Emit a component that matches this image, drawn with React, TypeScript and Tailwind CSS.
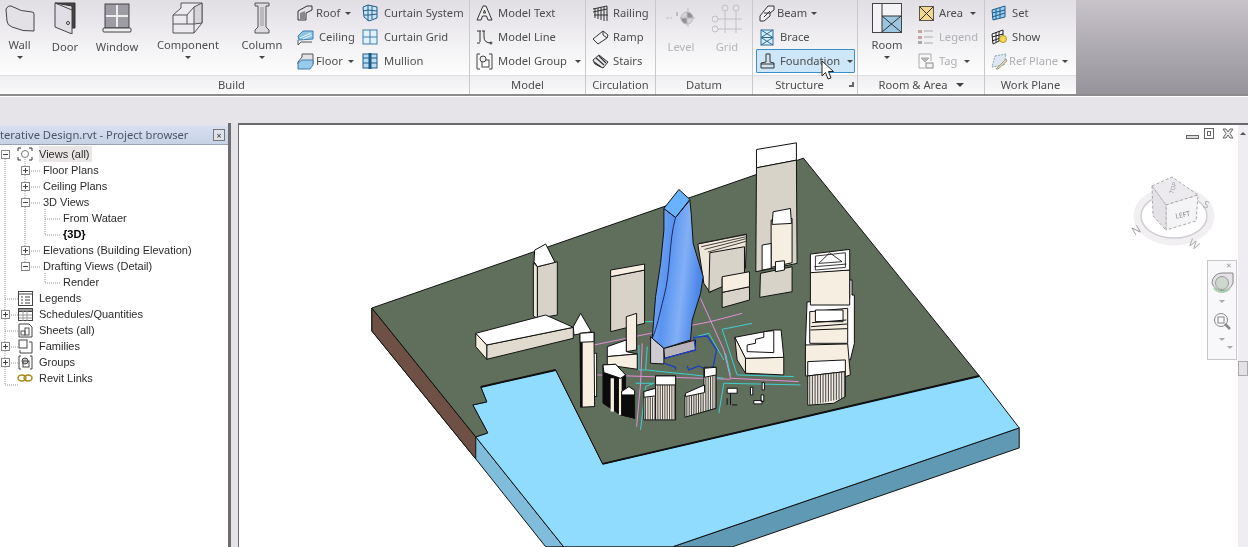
import type { ReactNode } from "react";

const FONT = "[font-family:'Noto_Sans','Open_Sans',sans-serif]";

function Caret() {
  return <span className="inline-block h-0 w-0 border-x-[3px] border-t-[3px] border-x-transparent border-t-[#444]" />;
}

function Ico({ children, w = 18, h = 18 }: { children: ReactNode; w?: number; h?: number }) {
  return (
    <svg width={w} height={h} viewBox={`0 0 ${w} ${h}`} fill="none" stroke="#333" strokeWidth="1" className="shrink-0">
      {children}
    </svg>
  );
}

const icons = {
  wall: (
    <Ico w={30} h={30}>
      <path d="M1 6 Q3 2 6 3 Q16 9 27 9 Q29 9 29 11 L29 28 Q18 29 7 24 Q2 22 2 18 Z" fill="#e3e1e6" stroke="#444" />
    </Ico>
  ),
  door: (
    <Ico w={24} h={32}>
      <path d="M2 1 L22 1 L22 26 L19 26 L19 4 Z" fill="#444" />
      <path d="M2 1 L19 8 L19 32 L2 25 Z" fill="#e1dfe5" stroke="#444" />
      <circle cx="15" cy="21" r="1.5" fill="#fff" stroke="#333" />
    </Ico>
  ),
  window: (
    <Ico w={30} h={30}>
      <rect x="3" y="1" width="24" height="24" fill="#9d9ca4" stroke="#444" />
      <path d="M15 2 V24 M4 13 H26" stroke="#eee" strokeWidth="2" />
      <rect x="1" y="25" width="28" height="4" rx="1" fill="#eeeef0" stroke="#444" />
    </Ico>
  ),
  component: (
    <Ico w={32} h={32}>
      <path d="M1 13 L9 6 L9 1 L30 1 L30 21 L22 31 L1 31 Z" fill="#eceaee" stroke="#555" />
      <path d="M1 13 H15 V22 H1 M15 13 L22 5 M22 5 H30 M22 31 V22 H15" stroke="#555" />
      <path d="M22 5 V22 L30 21 V1 Z" fill="#d7d5da" stroke="#555" />
    </Ico>
  ),
  column: (
    <Ico w={16} h={32}>
      <path d="M1 1 H15 V4 H12 V25 L15 28 V31 H1 V28 L4 25 V4 H1 Z" fill="#dcdade" stroke="#555" />
      <path d="M7 5 V24 M9 5 V24" stroke="#999" />
    </Ico>
  ),
  roof: (
    <Ico w={16} h={16}>
      <path d="M1 15 V6 L10 1 H15 V5 L9 8 V15 Z" fill="#e3e1e6" stroke="#333" />
      <path d="M3 14 V8 L8 6 L8 14 Z" fill="#888" stroke="none" />
    </Ico>
  ),
  ceiling: (
    <Ico w={17} h={17}>
      <path d="M1 7 L6 2 H16 V10 L2 11 Z" fill="#8fc3e6" stroke="#3c7fb1" />
      <path d="M3 9 L14 4 M6 10 L15 6" stroke="#e8f4fb" />
      <path d="M1 11 V16 L4 13 H15" stroke="#555" />
    </Ico>
  ),
  floor: (
    <Ico w={17} h={18}>
      <path d="M1 10 L5 5 V2 H16 V9 L16 12 H1 Z" fill="#e3e1e6" stroke="#555" />
      <path d="M1 11 L5 8 H16 V13 L13 17 H1 Z" fill="#98cbea" stroke="#3c7fb1" />
    </Ico>
  ),
  curtainSystem: (
    <Ico w={16} h={18}>
      <path d="M1 3 L6 1 L15 3 V14 L7 17 L2 13 Z" fill="#cfe5f5" stroke="#1e5c8c" />
      <path d="M6 1 V17 M10 2 V15 M1 7 L6 6 L15 7 M2 11 L7 11 L15 10" stroke="#1e5c8c" />
    </Ico>
  ),
  curtainGrid: (
    <Ico w={16} h={16}>
      <rect x="1" y="1" width="14" height="14" fill="#e2f0fa" stroke="#3c7fb1" />
      <path d="M8 1 V15 M1 8 H15" stroke="#3c7fb1" />
    </Ico>
  ),
  mullion: (
    <Ico w={16} h={16}>
      <rect x="1" y="1" width="14" height="14" fill="#bcdcf2" stroke="#1e5c8c" />
      <path d="M8 0 V16" stroke="#1e5c8c" strokeWidth="3" />
      <path d="M1 5 H15 M1 10 H15" stroke="#1e5c8c" />
    </Ico>
  ),
  modelText: (
    <Ico w={17} h={17}>
      <path d="M1 15 L7 1 H10 L16 15 H12 L10.5 11 H6.5 L5 15 Z" fill="#eee" stroke="#333" />
      <path d="M7.5 8 L8.5 5 L9.5 8 Z" stroke="#333" />
    </Ico>
  ),
  modelLine: (
    <Ico w={17} h={17}>
      <path d="M4 2 V13 M8 2 V8 Q8 14 15 14" stroke="#333" />
      <path d="M1 2 H5 M6 2 H9 M1 14 H4" stroke="#333" />
      <circle cx="15" cy="14" r="1" stroke="#333" />
    </Ico>
  ),
  modelGroup: (
    <Ico w={17} h={17}>
      <path d="M4 1 H1 V16 H4 M13 1 H16 V16 H13" stroke="#444" />
      <rect x="6" y="7" width="7" height="7" fill="#fff" stroke="#444" />
      <circle cx="7" cy="6" r="3" fill="#eee" stroke="#444" />
    </Ico>
  ),
  railing: (
    <Ico w={17} h={17}>
      <path d="M1 4 L15 1 M1 7 L15 4" stroke="#333" />
      <path d="M3 3 V13 M6 3 V14 M9 2 V15 M12 2 V16 M15 1 V16 M2 10 H16" stroke="#333" />
    </Ico>
  ),
  ramp: (
    <Ico w={17} h={15}>
      <path d="M1 9 L11 1 L16 5 L15 8 L6 14 Z" fill="#f2f1f3" stroke="#333" />
      <path d="M11 1 L11 5 L15 8" stroke="#333" />
    </Ico>
  ),
  stairs: (
    <Ico w={17} h={15}>
      <path d="M1 6 L7 1 L16 8 L11 14 L3 10 Z" fill="#e9e7eb" stroke="#333" />
      <path d="M4 4 L12 11 M7 2 L14 9 M2 8 L9 13" stroke="#333" strokeWidth="1.2" />
    </Ico>
  ),
  beam: (
    <Ico w={16} h={17}>
      <path d="M1 11 L9 1 H15 V5 L11 8 L11 11 L5 16 H1 Z" fill="#f0eef2" stroke="#333" />
      <path d="M5 8 H11 M5 12 L11 6" stroke="#333" />
    </Ico>
  ),
  brace: (
    <Ico w={14} h={17}>
      <rect x="1" y="1" width="12" height="15" fill="#d9edf9" stroke="#2c6e9b" />
      <path d="M1 1 L13 8.5 L1 16 M13 1 L1 8.5 L13 16 M1 8.5 H13" stroke="#2c6e9b" />
    </Ico>
  ),
  foundation: (
    <Ico w={15} h={16}>
      <path d="M6 1 H10 V9 L14 10 V15 H1 V10 L6 9 Z" fill="#cfe4f2" stroke="#333" />
      <path d="M1 11 H14" stroke="#333" />
    </Ico>
  ),
  area: (
    <Ico w={15} h={15}>
      <rect x="0.5" y="0.5" width="14" height="14" fill="#f2d98e" stroke="#555" />
      <path d="M1 1 L14 14 M14 1 L1 14" stroke="#333" />
    </Ico>
  ),
  legend: (
    <Ico w={16} h={16}>
      <rect x="0" y="1" width="4" height="3" fill="#c9a49e" stroke="none" />
      <rect x="0" y="7" width="4" height="3" fill="#c9a49e" stroke="none" />
      <rect x="0" y="12" width="4" height="3" fill="#a8a8ad" stroke="none" />
      <path d="M6 2 H15 M6 8 H15 M6 14 H15" stroke="#aaa" />
    </Ico>
  ),
  tag: (
    <Ico w={16} h={16}>
      <path d="M1 1 H13 V8 M1 1 V15 H7" stroke="#aaa" />
      <path d="M3 5 H11 L7 9 Z" fill="#bbb" stroke="#aaa" />
      <rect x="8" y="10" width="7" height="5" stroke="#888" fill="#f3f3f3" />
    </Ico>
  ),
  set: (
    <Ico w={16} h={16}>
      <path d="M1 5 L14 1 V12 L2 15 Z" fill="#9bcdee" stroke="#1e5c8c" />
      <path d="M5 4 V14 M9 3 V13 M1 8 L14 5 M1 12 L14 8" stroke="#1e5c8c" />
    </Ico>
  ),
  show: (
    <Ico w={16} h={16}>
      <path d="M1 5 L12 1 V10 L2 15 Z" fill="#fff" stroke="#222" />
      <path d="M5 3 V13 M8 2 V12 M1 8 L12 5 M1 12 L12 8" stroke="#222" />
      <circle cx="12" cy="10" r="3.5" fill="#f5d860" stroke="#b99a1c" />
    </Ico>
  ),
  refPlane: (
    <Ico w={17} h={17}>
      <path d="M4 3 L15 1 L13 12 L1 14 Z" fill="#dde8f3" stroke="#8aa" strokeDasharray="2 1" />
      <path d="M5 16 L15 6 L16 8 L7 16 Z" fill="#e6dcb8" stroke="#a79c80" />
    </Ico>
  ),
  room: (
    <svg width="30" height="30" viewBox="0 0 30 30" className="shrink-0">
      <rect x="0.5" y="0.5" width="29" height="29" fill="#f4f4f6" stroke="#444" />
      <rect x="10" y="13" width="19" height="16" fill="#9cc6e0" />
      <path d="M10 1 V29 M10 13 H29 M10 13 L29 29 M29 13 L10 29" stroke="#333" fill="none" />
    </svg>
  ),
};

function LargeBtn({ icon, label, caret, className, disabled }: { icon: ReactNode; label: string; caret?: boolean; className: string; disabled?: boolean }) {
  return (
    <div className={`flex flex-col items-center ${className}`}>
      <div className="flex h-[35px] items-center">{icon}</div>
      <div className={`whitespace-nowrap ${caret ? "mt-[2px]" : "mt-1"} ${disabled ? "text-[#b5b5b8]" : ""}`}>{label}</div>
      {caret && <div className="flex h-2 items-center"><Caret /></div>}
    </div>
  );
}

function SmallBtn({ icon, label, caret, gap = "gap-[5px]", disabled, active }: { icon: ReactNode; label: string; caret?: boolean; gap?: string; disabled?: boolean; active?: boolean }) {
  return (
    <div className={`flex h-6 items-center whitespace-nowrap ${gap} ${active ? "-mx-[2px] rounded-[1px] border border-[#3b8fc6] bg-[#cde7f8] px-[1px]" : ""}`}>
      <span className="flex w-[18px] shrink-0 justify-center">{icon}</span>
      <span className={disabled ? "text-[#b0b0b4]" : ""}>{label}</span>
      {caret && <span className="ml-[3px] flex items-center"><Caret /></span>}
    </div>
  );
}

function Group({ title, className, children, extra, titleClass = "" }: { title: string; className: string; children: ReactNode; extra?: ReactNode; titleClass?: string }) {
  return (
    <div className={`flex shrink-0 flex-col border-r border-[#c9c8cc] ${className}`}>
      <div className="flex h-[75px] bg-gradient-to-b from-[#e1dee4] to-[#fefefe]">{children}</div>
      <div className={`relative flex h-[19px] items-center justify-center gap-2 border-t border-[#dededf] bg-gradient-to-b from-[#eeedf0] to-[#fbfbfb] ${titleClass}`}>
        <span>{title}</span>
        {extra}
      </div>
    </div>
  );
}

function Ribbon() {
  return (
    <div className="flex h-[94px] text-[#4d4d4d]">
      <Group title="Build" className="w-[470px]" titleClass="pr-[6px]">
        <LargeBtn icon={icons.wall} label="Wall" caret className="w-[39px]" />
        <LargeBtn icon={icons.door} label="Door" className="w-[52px]" />
        <LargeBtn icon={icons.window} label="Window" className="w-[52px]" />
        <LargeBtn icon={icons.component} label="Component" caret className="w-[90px]" />
        <LargeBtn icon={icons.column} label="Column" caret className="w-[58px]" />
        <div className="ml-[5px] flex w-[65px] flex-col pt-[1px]">
          <SmallBtn icon={icons.roof} label="Roof" caret gap="gap-[2px]" />
          <SmallBtn icon={icons.ceiling} label="Ceiling" gap="gap-[5px]" />
          <SmallBtn icon={icons.floor} label="Floor" caret gap="gap-[2px]" />
        </div>
        <div className="flex flex-col pt-[1px]">
          <SmallBtn icon={icons.curtainSystem} label="Curtain System" gap="gap-[5px]" />
          <SmallBtn icon={icons.curtainGrid} label="Curtain Grid" gap="gap-[5px]" />
          <SmallBtn icon={icons.mullion} label="Mullion" gap="gap-[5px]" />
        </div>
      </Group>
      <Group title="Model" className="w-[116px]">
        <div className="flex flex-col pl-[5px] pt-[1px]">
          <SmallBtn icon={icons.modelText} label="Model Text" />
          <SmallBtn icon={icons.modelLine} label="Model Line" />
          <SmallBtn icon={icons.modelGroup} label="Model Group" caret />
        </div>
      </Group>
      <Group title="Circulation" className="w-[70px]">
        <div className="flex flex-col pl-[5px] pt-[1px]">
          <SmallBtn icon={icons.railing} label="Railing" gap="gap-[4px]" />
          <SmallBtn icon={icons.ramp} label="Ramp" gap="gap-[4px]" />
          <SmallBtn icon={icons.stairs} label="Stairs" gap="gap-[4px]" />
        </div>
      </Group>
      <Group title="Datum" className="w-[97px]">
        <LargeBtn
          disabled
          className="ml-[2px] w-[46px]"
          label="Level"
          icon={
            <svg width="30" height="24" viewBox="0 0 30 24" fill="none" stroke="#bbb" className="shrink-0">
              <path d="M0 12 H6 M22 2 V22 M14 12 H30" strokeDasharray="3 1" />
              <circle cx="21" cy="12" r="6" fill="#d4d4d8" />
              <path d="M21 6 A6 6 0 0 1 27 12 H21 Z M21 18 A6 6 0 0 1 15 12 H21 Z" fill="#8f8f94" />
              <path d="M11 6 V10" stroke="#999" />
            </svg>
          }
        />
        <LargeBtn
          disabled
          className="w-[46px]"
          label="Grid"
          icon={
            <svg width="30" height="30" viewBox="0 0 30 30" fill="none" stroke="#c0c0c4" className="shrink-0">
              <circle cx="13" cy="5" r="3" />
              <circle cx="24" cy="5" r="3" />
              <circle cx="3" cy="16" r="3" />
              <circle cx="3" cy="26" r="3" />
              <path d="M13 8 V32 M24 8 V32 M6 16 H30 M6 26 H30" />
            </svg>
          }
        />
      </Group>
      <Group
        title="Structure"
        className="w-[105px]"
        titleClass="pr-[11px]"
        extra={<span className="absolute right-[3px] top-[6px] h-[5px] w-[5px] border-b-2 border-r-2 border-[#666]" />}
      >
        <div className="flex w-full flex-col pl-[5px] pr-[4px] pt-[1px]">
          <SmallBtn icon={icons.beam} label="Beam" caret gap="gap-[1px]" />
          <SmallBtn icon={icons.brace} label="Brace" gap="gap-[4px]" />
          <SmallBtn icon={icons.foundation} label="Foundation" caret gap="gap-[4px]" active />
        </div>
      </Group>
      <Group
        title="Room & Area"
        className="w-[127px]"
        extra={<span className="inline-block h-0 w-0 border-x-4 border-t-4 border-x-transparent border-t-[#444]" />}
      >
        <LargeBtn icon={icons.room} label="Room" caret className="ml-[4px] w-[50px]" />
        <div className="ml-[5px] flex flex-col pt-[1px]">
          <SmallBtn icon={icons.area} label="Area" caret gap="gap-[4px]" />
          <SmallBtn icon={icons.legend} label="Legend" disabled gap="gap-[4px]" />
          <SmallBtn icon={icons.tag} label="Tag" disabled caret gap="gap-[4px]" />
        </div>
      </Group>
      <Group title="Work Plane" className="w-[91px] border-r-0">
        <div className="flex flex-col pl-[5px] pt-[1px]">
          <SmallBtn icon={icons.set} label="Set" gap="gap-[4px]" />
          <SmallBtn icon={icons.show} label="Show" gap="gap-[4px]" />
          <SmallBtn icon={icons.refPlane} label="Ref Plane" caret disabled gap="gap-[1px]" />
        </div>
      </Group>
      <div className="flex-1 bg-gradient-to-b from-[#c7c3c9] to-[#96939a]" />
    </div>
  );
}

const treeIcons: Record<string, ReactNode> = {
  views: (
    <Ico w={16} h={14}>
      <path d="M1 4 V1 H4 M12 1 H15 V4 M1 10 V13 H4 M12 13 H15 V10" stroke="#333" />
      <circle cx="8" cy="7" r="3.5" stroke="#777" fill="#fff" />
    </Ico>
  ),
  legends: (
    <Ico w={15} h={15}>
      <rect x="0.5" y="0.5" width="14" height="14" fill="#fff" stroke="#444" />
      <path d="M0 3 H15" stroke="#444" />
      <path d="M3 6 H5 M7 6 H12 M3 9 H5 M7 9 H12 M3 12 H5 M7 12 H12" stroke="#444" />
    </Ico>
  ),
  schedules: (
    <Ico w={15} h={13}>
      <rect x="0.5" y="0.5" width="14" height="12" fill="#fff" stroke="#444" />
      <rect x="0.5" y="0.5" width="14" height="3" fill="#999" stroke="#444" />
      <path d="M5 3 V13 M9 3 V13 M1 7 H14 M1 10 H14" stroke="#999" />
    </Ico>
  ),
  sheets: (
    <Ico w={15} h={15}>
      <path d="M1 1 H11 L14 4 V14 H1 Z" fill="#fff" stroke="#444" />
      <rect x="3" y="8" width="4" height="4" stroke="#555" />
      <rect x="7" y="5" width="4" height="7" stroke="#555" />
    </Ico>
  ),
  families: (
    <Ico w={15} h={15}>
      <rect x="1" y="1" width="8" height="8" fill="#fff" stroke="#444" />
      <path d="M11 3 H14 V14 H2 V11" stroke="#444" />
    </Ico>
  ),
  groups: (
    <Ico w={15} h={15}>
      <path d="M3 1 H1 V14 H3 M12 1 H14 V14 H12" stroke="#444" />
      <circle cx="7" cy="6" r="3" fill="#ccc" stroke="#444" />
      <rect x="5" y="6" width="6" height="6" stroke="#444" />
    </Ico>
  ),
  links: (
    <Ico w={16} h={8}>
      <ellipse cx="5" cy="4" rx="4" ry="3" stroke="#a98a1b" strokeWidth="1.5" />
      <ellipse cx="11" cy="4" rx="4" ry="3" stroke="#a98a1b" strokeWidth="1.5" />
    </Ico>
  ),
};

function Expander({ open }: { open: boolean }) {
  return (
    <span className="relative block h-[9px] w-[9px] border border-[#888] bg-white">
      <span className="absolute left-[1px] top-[3px] h-[1px] w-[5px] bg-[#444]" />
      {!open && <span className="absolute left-[3px] top-[1px] h-[5px] w-[1px] bg-[#444]" />}
    </span>
  );
}

const treeRows = [
  { label: "Views (all)", level: 0, expander: "open", icon: "views", selected: true },
  { label: "Floor Plans", level: 1, expander: "closed" },
  { label: "Ceiling Plans", level: 1, expander: "closed" },
  { label: "3D Views", level: 1, expander: "open" },
  { label: "From Wataer", level: 2 },
  { label: "{3D}", level: 2, bold: true },
  { label: "Elevations (Building Elevation)", level: 1, expander: "closed" },
  { label: "Drafting Views (Detail)", level: 1, expander: "open" },
  { label: "Render", level: 2 },
  { label: "Legends", level: 0, icon: "legends" },
  { label: "Schedules/Quantities", level: 0, expander: "closed", icon: "schedules" },
  { label: "Sheets (all)", level: 0, icon: "sheets" },
  { label: "Families", level: 0, expander: "closed", icon: "families" },
  { label: "Groups", level: 0, expander: "closed", icon: "groups" },
  { label: "Revit Links", level: 0, icon: "links" },
];

function ProjectBrowser() {
  return (
    <div className="flex w-[228px] shrink-0 flex-col pt-[3px]">
      <div className="flex h-[18px] shrink-0 items-center justify-between overflow-hidden whitespace-nowrap bg-gradient-to-b from-[#d7e0f0] to-[#c6d2e6] pr-[3px] text-[#4a5568]">
        <span>terative Design.rvt - Project browser</span>
        <span className="flex h-[12px] w-[12px] shrink-0 items-center justify-center border border-[#777] bg-[#dfe2e8] text-[9px] leading-none text-[#333]">
          ×
        </span>
      </div>
      <div className="relative flex-1 border-t border-[#9aa3b2] bg-white pt-[1px] text-[11px] text-[#2b2b2b] [font-family:'Liberation_Sans',sans-serif]">
        <svg className="absolute left-0 top-0" width="228" height="260" fill="none" stroke="#999" strokeDasharray="1 1">
          <path d="M5 14 V240 H18 M25 14 V120 M25 26 H41 M25 42 H41 M25 58 H41 M25 106 H41 M25 122 H41 M45 64 V90 H60 M45 74 H60 M45 128 V138 H60 M5 154 H18 M5 170 H18 M5 186 H18 M5 202 H18 M5 218 H18" />
        </svg>
        <div className="relative flex flex-col">
          {treeRows.map((row) => (
            <div key={row.label} className="flex h-4 items-center whitespace-nowrap">
              <span className="flex w-[10px] shrink-0 justify-center">
                {row.level === 0 && row.expander && <Expander open={row.expander === "open"} />}
              </span>
              {row.level === 0 ? (
                <span className="ml-[7px] flex w-[16px] shrink-0 justify-center">{row.icon && treeIcons[row.icon]}</span>
              ) : (
                <span className="ml-[10px] flex w-[10px] shrink-0 justify-center">
                  {row.expander && <Expander open={row.expander === "open"} />}
                </span>
              )}
              <span
                className={`${row.level === 0 ? "ml-[6px]" : row.level === 1 ? "ml-[13px]" : "ml-[33px]"} ${
                  row.selected ? "bg-[#eae6e6] pr-[2px]" : ""
                } ${row.bold ? "font-bold text-black" : ""}`}
              >
                {row.label}
              </span>
            </div>
          ))}
        </div>
      </div>
    </div>
  );
}

const LIT = "#f6eee1";
const SHADE = "#d8d3c8";

function Poly({ d, fill = "#fff" }: { d: string; fill?: string }) {
  return <polygon points={d} fill={fill} stroke="#111" strokeWidth="3" strokeLinejoin="round" />;
}

// vertical stripes between two sloped edges, for the faceted round buildings
function Stripes({ from, to, step, top, bottom, topSlope = 0, bottomSlope = 0 }: { from: number; to: number; step: number; top: number; bottom: number; topSlope?: number; bottomSlope?: number }) {
  const xs: number[] = [];
  for (let x = from; x < to; x += step) xs.push(x);
  return (
    <g stroke="#222" strokeWidth="2.5">
      {xs.map((x) => (
        <line key={x} x1={x} x2={x} y1={top + (x - from) * topSlope} y2={bottom + (x - from) * bottomSlope} />
      ))}
    </g>
  );
}

function Scene() {
  return (
    <svg className="block h-full w-full" viewBox="238 125 1000 422">
      <defs>
        <linearGradient id="blueBody" x1="0" y1="0" x2="1" y2="0.3">
          <stop offset="0" stopColor="#7fb0f5" />
          <stop offset="0.4" stopColor="#5a94f0" />
          <stop offset="0.7" stopColor="#82b0f5" />
          <stop offset="1" stopColor="#4a86ea" />
        </linearGradient>
      </defs>
      {/* site */}
      <polygon points="371,308 371,331 475,459 545,547 563,547 475,437" fill="#7fbddb" stroke="#111" />
      <polygon points="371,308 371,331 475,459 475,437" fill="#6f5045" stroke="#111" />
      <polygon points="1019,428 1019,448 732,547 672,547" fill="#6099b3" stroke="#111" />
      <polygon points="475,437 487,433 472,405 486,402 480,387 555,370 602,464 979,376 1019,428 672,547 563,547" fill="#8fdcff" stroke="#111" />
      <polygon points="371,308 803,158 979,376 602,464 555,370 480,387 486,402 472,405 487,433 475,437" fill="#5f6f5c" stroke="#111" />
      <path d="M480 387 L555 370 M602 464 L979 376" stroke="#111" strokeWidth="2" />

      {/* left block group, measured at 3x from x=360 y=230 */}
      <g transform="translate(360 230) scale(0.3333)">
        <Poly d="530,110 590,95 590,255 530,265" fill={SHADE} />
        <Poly d="518,98 530,110 530,265 518,258" fill="#efe7d9" />
        <Poly d="522,60 555,42 583,97 530,110 520,95" />
        <Poly d="378,345 638,292 638,325 378,388" fill="#e1dbcf" />
        <Poly d="345,310 378,345 378,388 345,350" fill="#f3ecdf" />
        <Poly d="345,310 555,255 638,292 378,345" />
        <Poly d="660,250 692,305 640,315 638,290" />
      </g>

      {/* center blocks, measured at 3x from x=560 y=130 */}
      <g transform="translate(560 130) scale(0.3333)">
        <g stroke="#e58fd8" strokeWidth="3" fill="none">
          <path d="M100 645 L270 610 L450 575 L545 550" />
          <path d="M420 505 L490 660 L510 745 L715 755" />
          <path d="M110 735 L510 748" />
          <path d="M245 640 L240 760 L228 890" />
        </g>
        <g stroke="#3fd0d0" strokeWidth="3" fill="none">
          <path d="M245 575 L280 575 M235 645 L235 720 L255 720 L260 650 M255 720 L400 735 L490 745" />
          <path d="M485 598 L575 580 M485 598 L530 735 L700 740 M495 670 L510 735" />
          <path d="M225 760 L280 760 L255 770 L240 900 M490 760 L720 765 M490 760 L475 850" />
          <path d="M400 622 L445 610 L490 690" />
        </g>
        <Poly d="150,440 252,420 252,580 150,605" fill={SHADE} />
        <Poly d="150,420 252,402 252,420 150,440" fill={LIT} />
        {/* tall tower */}
        <Poly d="588,58 708,38 708,90 588,113" />
        <Poly d="588,113 708,90 710,400 586,425" fill={SHADE} />
        <Poly d="600,430 695,410 695,485 598,502" fill={SHADE} />
        <Poly d="632,270 695,265 695,398 632,412" fill={LIT} />
        <Poly d="638,245 690,235 693,280 635,283" />
        <Poly d="605,345 632,340 632,415 605,420" />
        <Poly d="645,395 672,392 672,420 645,425" />
        {/* mid block */}
        <Poly d="412,342 558,312 555,415 448,487 430,460" fill="#efe7d9" />
        <Poly d="448,368 552,350 552,430 485,445 485,470 445,487" fill={SHADE} />
        <path d="M415 340 L556 314 M422 350 L556 320 M432 358 L556 326 M442 366 L556 334" stroke="#222" strokeWidth="2.5" fill="none" />
        <Poly d="485,487 567,470 567,510 485,533" fill={SHADE} />
        <Poly d="485,440 567,425 567,470 485,487" fill={LIT} />
        {/* blue tower */}
        <Poly d="270,620 310,655 310,702 270,700" fill="#cfcbd3" />
        <Poly d="310,655 405,630 405,660 312,685" fill="#b7b3b8" />
        <Poly d="310,235 345,262 388,210 392,250 398,340 428,440 420,490 395,570 390,630 310,655 275,625 285,500 300,400 310,300" fill="url(#blueBody)" />
        <Poly d="355,178 388,208 345,262 310,235" fill="#69b2ff" />
        <path d="M345 262 C325 330 330 430 310 500 C295 560 290 590 275 625" stroke="#1b2a5e" strokeWidth="3" fill="none" />
        <path d="M312 685 L405 660 L400 622 L440 618 L468 660 L458 710 L435 718 L415 708 L385 720 L380 708 M312 700 L345 712 L345 720" stroke="#1d3ec0" strokeWidth="4" fill="none" />
        {/* foreground left */}
        <Poly d="197,560 228,550 228,660 197,665" fill={LIT} />
        <Poly d="140,650 197,630 197,665 230,672 140,680" />
        <Poly d="140,680 230,672 230,718 140,705" fill={LIT} />
        <path d="M100 670 H108 V800 H102" fill="#fff" stroke="#111" strokeWidth="3" />
        <Poly d="58,610 100,607 102,830 60,832" fill={LIT} />
        <Poly d="58,610 100,607 100,635 58,637" />
        <rect x="58" y="637" width="8" height="195" fill="#0b0b0b" />
        <Poly d="127,705 165,703 195,735 195,850 222,865 180,855 127,820" fill="#0b0b0b" />
        <rect x="150" y="745" width="10" height="100" fill={LIT} />
        <rect x="175" y="745" width="8" height="110" fill={LIT} />
        <Poly d="127,705 165,703 195,735 180,745 130,728" />
        <Poly d="183,785 205,770 222,782 222,865 183,855" fill="#0b0b0b" />
        <Poly d="183,785 205,770 222,782 222,795 183,795" />
        {/* striped */}
        <Poly d="285,738 345,738 345,870 285,870" fill={LIT} />
        <Poly d="285,738 345,738 345,765 285,765" />
        <Stripes from={292} to={345} step={7} top={765} bottom={870} />
        <Poly d="250,785 285,775 285,870 250,870" fill={LIT} />
        <Poly d="250,785 285,775 285,798 250,802" />
        <Stripes from={255} to={285} step={7} top={802} bottom={870} />
        <Poly d="373,795 430,768 430,712 467,712 467,835 373,862" fill="#e9e4da" />
        <Poly d="375,790 432,765 432,788 375,800" />
        <Poly d="432,715 467,712 467,735 432,742" />
        <Stripes from={379} to={432} step={7} top={800} bottom={861} topSlope={-0.22} bottomSlope={-0.28} />
        <Stripes from={436} to={467} step={7} top={742} bottom={846} topSlope={-0.2} bottomSlope={-0.28} />
        {/* small objects */}
        <path d="M500 775 H530 V790 H500 Z M510 790 V825 M500 805 V825 M515 825 H530" stroke="#111" strokeWidth="3" fill="#fff" />
        <path d="M605 758 H612 V780 H605 Z M570 772 H577 V795 H570 Z M580 812 H605 V822 H580 Z M602 795 H610 V815 H602 Z" stroke="#111" strokeWidth="3" fill="#fff" />
        {/* cream block right */}
        <Poly d="555,685 670,682 670,735 555,730" fill={LIT} />
        <Poly d="523,622 640,600 662,600 670,682 555,685" />
        <Poly d="523,622 555,685 555,730 530,690" fill="#f0e8da" />
        <path d="M560 665 V645 L585 640 V628 L610 622 V605 L640 602 V668 Z" fill="#fff" stroke="#111" strokeWidth="3" />
        {/* right stack */}
        <Poly d="740,516 868,505 868,450 875,450 875,495 882,495 882,640 870,690 735,645" fill="#fff" />
        <Poly d="750,425 868,420 868,525 750,525" fill={LIT} />
        <Poly d="750,372 868,358 868,420 750,428" />
        <path d="M765 378 L855 368 V412 L765 420 Z M775 400 L808 368 L845 395 Z M762 410 L858 402" stroke="#111" strokeWidth="2.5" fill="none" />
        <Poly d="748,545 862,535 862,640 748,640" fill={LIT} />
        <Poly d="765,540 848,540 848,575 765,575" />
        <path d="M755 578 L858 570 M752 590 L860 582 M750 600 L860 596" stroke="#111" strokeWidth="3" fill="none" />
        <Poly d="735,645 862,642 870,735 855,740 735,738" fill={LIT} />
        <Poly d="742,695 855,690 855,725 742,738" />
        <Poly d="742,738 855,725 855,800 820,820 742,826" fill="#f2ede4" />
        <Stripes from={748} to={855} step={8} top={737} bottom={826} topSlope={-0.12} bottomSlope={-0.2} />
      </g>
    </svg>
  );
}

function NavOverlay() {
  return (
    <>
      {/* window buttons */}
      <svg className="absolute left-[947px] top-[2px]" width="50" height="14" viewBox="1186 127 50 14" fill="none" stroke="#666">
        <rect x="1186.5" y="135.5" width="12" height="3" fill="#ddd" />
        <rect x="1204.5" y="128.5" width="9" height="10" fill="#fff" />
        <rect x="1207.5" y="131.5" width="3" height="4" />
        <path d="M1223 129 H1226 L1228 132 L1230 129 H1233 L1230 133.5 L1233 138 H1230 L1228 135 L1226 138 H1223 L1226 133.5 Z" fill="#eee" />
      </svg>
      {/* view cube */}
      <svg className="absolute left-[885px] top-[46px]" width="100" height="90" viewBox="1125 173 100 90">
        <ellipse cx="1175" cy="218" rx="37" ry="26" fill="none" stroke="#f1eff2" strokeWidth="7" />
        <ellipse cx="1175" cy="218" rx="33" ry="22" fill="none" stroke="#cfcdd1" strokeWidth="1.5" />
        <polygon points="1153,188 1173,179 1199,197 1167,207" fill="#eceaee" stroke="#aaa" strokeDasharray="3 2" />
        <polygon points="1167,207 1199,197 1197,223 1167,232" fill="#f4f3f5" stroke="#aaa" strokeDasharray="3 2" />
        <polygon points="1153,188 1167,207 1167,232 1154,218" fill="#e4e2e6" stroke="#aaa" strokeDasharray="3 2" />
        <text x="1176" y="220" fontSize="7" fill="#888" transform="rotate(-12 1180 216)">LEFT</text>
        <text x="1170" y="196" fontSize="6" fill="#999" transform="rotate(-70 1172 193)">TOP</text>
        <text x="1205" y="209" fontSize="10" fill="#aaa" transform="rotate(25 1205 205)">S</text>
        <text x="1133" y="236" fontSize="11" fill="#aaa" transform="rotate(-30 1137 232)">N</text>
        <text x="1190" y="250" fontSize="11" fill="#aaa" transform="rotate(35 1195 246)">W</text>
      </svg>
      {/* navigation bar */}
      <div className="absolute right-[1px] top-[135px] flex h-[100px] w-[30px] flex-col items-center border border-[#c8c6ca] bg-[#f8f7f9] text-[#999]">
        <span className="self-end pr-[4px] text-[7px] leading-[10px]">✕</span>
        <svg width="26" height="24" viewBox="0 0 26 24" className="mt-[1px]">
          <path d="M3 11 A10 10 0 0 1 13 1 H24 V11 A11 11 0 0 1 3 11 Z" fill="#e4e2e6" stroke="#888" />
          <circle cx="13" cy="11" r="6.5" fill="#cfd8cf" stroke="#999" />
          <path d="M5 16 Q13 24 21 16" stroke="#a6d1ac" strokeWidth="2" fill="none" />
        </svg>
        <span className="mt-[4px] h-0 w-0 border-x-[3px] border-t-[3px] border-x-transparent border-t-[#aaa]" />
        <svg width="18" height="18" viewBox="0 0 18 18" fill="none" stroke="#888" className="mt-[9px]">
          <circle cx="8" cy="8" r="6.5" />
          <rect x="5" y="5" width="6" height="6" />
          <path d="M12 12 L17 17" strokeWidth="2.5" />
        </svg>
        <span className="mt-[8px] h-0 w-0 border-x-[3px] border-t-[3px] border-x-transparent border-t-[#aaa]" />
        <span className="mr-[3px] mt-[5px] h-0 w-0 self-end border-x-[3px] border-t-[3px] border-x-transparent border-t-[#aaa]" />
      </div>
    </>
  );
}

export default function App() {
  return (
    <div className={`relative flex h-[547px] w-[1248px] flex-col overflow-hidden bg-[#e5e2e8] text-[11.2px] leading-[16px] blur-[0.3px] ${FONT}`}>
      <Ribbon />
      <div className="h-[3px] shrink-0 border-t-2 border-[#8c8b8e] bg-white" />
      <div className="h-[26px] shrink-0 bg-[#e6e3e9]" />
      <div className="flex min-h-0 flex-1">
        <ProjectBrowser />
        <div className="w-[10px] shrink-0 border-l-[3px] border-[#6f6f72] bg-[#e5e2e8]" />
        <div className="relative min-w-0 flex-1 border-l border-t-2 border-[#6a6a6c] bg-white">
          <Scene />
          <NavOverlay />
        </div>
        <div className="flex w-[10px] shrink-0 flex-col items-center border-t-2 border-[#6a6a6c] bg-[#efedf1]">
          <span className="mt-[7px] h-0 w-0 border-x-[3px] border-b-[3px] border-x-transparent border-b-[#555]" />
          <span className="mt-[226px] h-[15px] w-full border border-[#aaa] bg-[#e3e1e5]" />
        </div>
      </div>
      {/* mouse pointer over the Foundation button */}
      <svg className="absolute left-[821px] top-[60px]" width="14" height="21" viewBox="0 0 14 21">
        <path d="M1 1 L1 16 L4.5 12.5 L7 19 L10 18 L7.5 11.5 L12.5 11.5 Z" fill="#fff" stroke="#222" />
      </svg>
    </div>
  );
}
